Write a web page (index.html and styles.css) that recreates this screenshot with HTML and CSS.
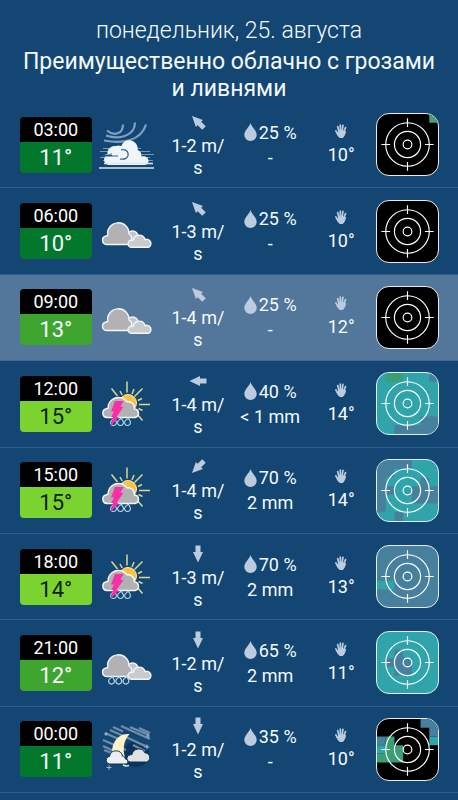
FILE: index.html
```html
<!DOCTYPE html>
<html lang="ru">
<head>
  <meta charset="UTF-8">
  <meta name="viewport" content="width=device-width, initial-scale=1">
  <title>Прогноз погоды</title>
  <link rel="stylesheet" href="styles.css">
</head>
<body>
  <!-- Shared icons -->
  <svg class="sprite" aria-hidden="true">
    <symbol id="arrow" viewBox="0 0 18 18"><path fill="#bccbdd" d="M6.5.5h5v6.500h2.500L9 17.500 4 7h2.500z"/></symbol>
    <symbol id="drop" viewBox="0 0 13 18"><path fill="#bccbdd" d="M6.500 0C7.500 4 12.700 7.500 12.700 12a6.200 6 0 0 1-12.400 0C.3 7.500 5.500 4 6.500 0z"/></symbol>
    <symbol id="hand" viewBox="0 0 12 14">
      <g fill="none" stroke="#bccbdd" stroke-width="1.700" stroke-linecap="round">
        <path d="M4 8 2.700 2.500M5.500 8 5.300 1.200M7 8 7.900 1.300M8.300 9l2.200-5.400M3.500 11 .9 7"/>
      </g>
      <path fill="#bccbdd" d="M3 6.500h6.800l1.200.8c-.2 2.700-1.200 4.700-3.200 6.700H4.800C3.200 12.600 2 11 1.200 9L3 9z"/>
    </symbol>
    <symbol id="scope" viewBox="0 0 63 63">
      <g fill="none" stroke="#fff" stroke-width="1.200">
        <circle cx="31.500" cy="31.500" r="4.500"/>
        <circle cx="31.500" cy="31.500" r="13.500"/>
        <circle cx="31.500" cy="31.500" r="22.500"/>
        <path d="M31.500 4.500v9M31.500 49.500v9M4.500 31.500h9M49.500 31.500h9"/>
      </g>
    </symbol>
    <symbol id="clouds" viewBox="0 0 60 56">
      <g stroke="#f1f6fa" stroke-width="1.400" stroke-linejoin="round">
        <circle cx="35.500" cy="33.500" r="5.500" fill="#c4c4c6"/>
        <path fill="#b2b2b4" d="M9.500 41.500a4.300 4.300 0 0 1-.5-8.500l1.800-.5A10.700 10.700 0 1 1 32 31l2.500 2v8.500z"/>
        <path fill="#cbcbcd" d="M34.500 44.300a3.500 3.500 0 0 1 0-7l1.800-.3a6 6 0 0 1 11.700-.300a3.900 3.900 0 0 1 3.500 7.600z"/>
      </g>
    </symbol>
    <symbol id="rain" viewBox="0 0 60 56">
      <use href="#clouds"/>
      <g fill="#134672" stroke="#b5d9ee" stroke-width="1.200">
        <path id="rain-drop" d="M15.500 41.500c0 1.500 1.900 2.300 1.900 4.300a2.900 2.900 0 1 1-5.700-.3c.2-1.800 2.400-2.500 3.800-4z"/>
        <use href="#rain-drop" x="7.200"/>
        <use href="#rain-drop" x="14.400"/>
      </g>
    </symbol>
    <symbol id="thunder" viewBox="0 0 60 56">
      <g stroke="#d9d795" stroke-width="1.500">
        <path d="M30 5.500v11M14.500 12.500l6 7.500M23 15l2.200 4M37 13l-2 5M45.500 12.500l-8 8M45 22.500l-4 2M53 28.500H42M45.500 34.500l-4-2M45.500 44.500 40 38"/>
      </g>
      <circle cx="31" cy="27" r="8.500" fill="#fcc23f" stroke="#fbe9ae"/>
      <path fill="#b1b0b3" stroke="#f7f7fa" stroke-width="1.500" stroke-linejoin="round" d="M10 41.500a4.400 4.400 0 0 1-.6-8.700l1.700-.6a10.400 10.400 0 0 1 18.800-6.400a6.500 6.500 0 0 1 7.600 7.200a4.300 4.300 0 0 1 .5 8.500z"/>
      <g fill="#134672" stroke="#b5d9ee" stroke-width="1.100">
        <use href="#rain-drop" x="2" y=".5"/>
        <use href="#rain-drop" x="9" y=".5"/>
        <use href="#rain-drop" x="16" y=".5"/>
      </g>
      <path fill="#fa2fa5" d="M18 25h8.500l-3 5.800h3L19.500 41h2.300L13.500 50.500l2.700-9.500h-2l2.800-5.500h-3z"/>
    </symbol>
    <symbol id="wind-fog" viewBox="0 0 60 56">
      <g fill="none" stroke="#7fa0c2" stroke-width="2.200">
        <path d="M10 13.500C17 19.500 26 17 26 7.500M9 18.500C22 23 38 19 38 5.500M7 23.500C26 27 44 24 49 7.500"/>
      </g>
      <g stroke="#7898b8" stroke-width="1">
        <path d="M6 31.500h38M3 34.500h50M8 37.500h49M3 40.500h50M6 43.500h50"/>
      </g>
      <path fill="#f2f5f8" d="M11 48a5.500 5.500 0 0 1-2.500-9h6.800a7.200 7.200 0 0 1 8.900-9.900a8.500 8.500 0 0 1 16.500 3.800a6.500 6.500 0 0 1 3.800 6.600c3.500-1 7 1 7 4.500S49 48 47 48z"/>
      <path fill="#f2f5f8" d="M10.500 37.500a7.300 7.300 0 0 1 8.800-8.300a7 7 0 0 1 5 4.500z"/>
      <path fill="none" stroke="#34628d" stroke-width="1.200" d="M5 39h16M24 33c4-1.500 8 1.500 7 5.500-1 3.500-5 4-8 3.500"/>
      <path stroke="#dce6ef" stroke-width="1.700" d="M2 51h55M7 46.500h49"/>
    </symbol>
    <symbol id="night-fog" viewBox="0 0 60 56">
      <circle cx="39.500" cy="33" r="13" fill="#0c3359"/>
      <g stroke="#6f8cab" stroke-width="2.200">
        <path d="m16 6 10 4.500M24 5l29 13M33 6l19 8M42 7l11 5M13 9l38 17M8 12l18 8M6 19l23 10M31 17l19 9M6 25l15 7M7 29l10 4M36 24l12 6"/>
      </g>
      <path fill="#fff2c7" d="M32.500 13C21.500 12.500 15 20 15 32l13 4c-2.500-8-1.500-16 4.500-23z"/>
      <g stroke="#0c3359" stroke-width="1">
        <path fill="#eeeef0" d="M12.500 43a3.800 3.800 0 0 1-1-7.300l1-.2a6.600 6.600 0 0 1 13-.4c2 0 2.700 1.500 2.900 3 3.200.5 3.500 4.900-.2 4.900z"/>
        <path fill="#e1e1e4" d="M33.500 41a3.600 3.600 0 0 1 0-7.200l1.500-.3a6.900 6.900 0 0 1 13-1.600c5.500 0 6.500 7.500 1.500 9.100z"/>
      </g>
      <path fill="none" stroke="#dbe5ee" stroke-width="1.500" d="M26 44q3 1.500 6 .5"/>
      <path fill="none" stroke="#8fb4d4" d="M50 23.500v5M47.500 26h5M12 44v5M9.500 46.500h5M9 11v4M7 13h4M51 13v4M49 15h4"/>
    </symbol>
  </svg>

  <main class="forecast">
    <header class="forecast-header">
      <p class="date">понедельник, 25. августа</p>
      <h1>Преимущественно облачно с грозами и ливнями</h1>
    </header>

    <table class="hours">
      <tbody>
        <tr>
          <th scope="row" class="col-time"><div class="tile"><time>03:00</time><span class="temp temp-low">11°</span></div></th>
          <td class="col-icon"><svg class="weather"><use href="#wind-fog"/></svg></td>
          <td class="col-wind"><svg class="arrow"><use href="#arrow" transform="rotate(135 9 9)"/></svg>1-2 m/<wbr>s</td>
          <td class="col-rain"><div class="chance"><svg class="drop"><use href="#drop"/></svg>25 %</div>-</td>
          <td class="col-feels"><svg class="hand"><use href="#hand"/></svg>10°</td>
          <td class="col-radar">
            <svg class="radar" viewBox="0 0 63 63">
              <path fill="#4b9d82" d="M54 0h9v9h-9z"/>
              <use href="#scope"/>
            </svg>
          </td>
        </tr>
        <tr>
          <th scope="row" class="col-time"><div class="tile"><time>06:00</time><span class="temp temp-low">10°</span></div></th>
          <td class="col-icon"><svg class="weather"><use href="#clouds"/></svg></td>
          <td class="col-wind"><svg class="arrow"><use href="#arrow" transform="rotate(135 9 9)"/></svg>1-3 m/<wbr>s</td>
          <td class="col-rain"><div class="chance"><svg class="drop"><use href="#drop"/></svg>25 %</div>-</td>
          <td class="col-feels"><svg class="hand"><use href="#hand"/></svg>10°</td>
          <td class="col-radar"><svg class="radar" viewBox="0 0 63 63"><use href="#scope"/></svg></td>
        </tr>
        <tr class="current">
          <th scope="row" class="col-time"><div class="tile"><time>09:00</time><span class="temp temp-mid">13°</span></div></th>
          <td class="col-icon"><svg class="weather"><use href="#clouds"/></svg></td>
          <td class="col-wind"><svg class="arrow"><use href="#arrow" transform="rotate(135 9 9)"/></svg>1-4 m/<wbr>s</td>
          <td class="col-rain"><div class="chance"><svg class="drop"><use href="#drop"/></svg>25 %</div>-</td>
          <td class="col-feels"><svg class="hand"><use href="#hand"/></svg>12°</td>
          <td class="col-radar"><svg class="radar" viewBox="0 0 63 63"><use href="#scope"/></svg></td>
        </tr>
        <tr>
          <th scope="row" class="col-time"><div class="tile"><time>12:00</time><span class="temp temp-high">15°</span></div></th>
          <td class="col-icon"><svg class="weather"><use href="#thunder"/></svg></td>
          <td class="col-wind"><svg class="arrow"><use href="#arrow" transform="rotate(90 9 9)"/></svg>1-4 m/<wbr>s</td>
          <td class="col-rain"><div class="chance"><svg class="drop"><use href="#drop"/></svg>40 %</div>&lt; 1 mm</td>
          <td class="col-feels"><svg class="hand"><use href="#hand"/></svg>14°</td>
          <td class="col-radar">
            <svg class="radar radar-teal" viewBox="0 0 63 63">
              <path fill="#3b9f76" d="M9 0h18v9H9z"/>
              <path fill="#46809c" d="M54 0h9v9h-9zM45 45h18v18H18v-9h27z"/>
              <use href="#scope"/>
            </svg>
          </td>
        </tr>
        <tr>
          <th scope="row" class="col-time"><div class="tile"><time>15:00</time><span class="temp temp-high">15°</span></div></th>
          <td class="col-icon"><svg class="weather"><use href="#thunder"/></svg></td>
          <td class="col-wind"><svg class="arrow"><use href="#arrow" transform="rotate(45 9 9)"/></svg>1-4 m/<wbr>s</td>
          <td class="col-rain"><div class="chance"><svg class="drop"><use href="#drop"/></svg>70 %</div>2 mm</td>
          <td class="col-feels"><svg class="hand"><use href="#hand"/></svg>14°</td>
          <td class="col-radar">
            <svg class="radar radar-teal" viewBox="0 0 63 63">
              <path fill="#46809c" d="M0 0h36v9H18v9H9v9h9v9H9v18H0zM45 18h9v9h9v18H36V27h9zM18 54h9v9h-9z"/>
              <use href="#scope"/>
            </svg>
          </td>
        </tr>
        <tr>
          <th scope="row" class="col-time"><div class="tile"><time>18:00</time><span class="temp temp-high">14°</span></div></th>
          <td class="col-icon"><svg class="weather"><use href="#thunder"/></svg></td>
          <td class="col-wind"><svg class="arrow"><use href="#arrow"/></svg>1-3 m/<wbr>s</td>
          <td class="col-rain"><div class="chance"><svg class="drop"><use href="#drop"/></svg>70 %</div>2 mm</td>
          <td class="col-feels"><svg class="hand"><use href="#hand"/></svg>13°</td>
          <td class="col-radar">
            <svg class="radar radar-slate" viewBox="0 0 63 63">
              <path fill="#2fa5ab" d="M0 36h18v9H0z"/>
              <use href="#scope"/>
            </svg>
          </td>
        </tr>
        <tr>
          <th scope="row" class="col-time"><div class="tile"><time>21:00</time><span class="temp temp-mid">12°</span></div></th>
          <td class="col-icon"><svg class="weather"><use href="#rain"/></svg></td>
          <td class="col-wind"><svg class="arrow"><use href="#arrow"/></svg>1-2 m/<wbr>s</td>
          <td class="col-rain"><div class="chance"><svg class="drop"><use href="#drop"/></svg>65 %</div>2 mm</td>
          <td class="col-feels"><svg class="hand"><use href="#hand"/></svg>11°</td>
          <td class="col-radar">
            <svg class="radar radar-teal" viewBox="0 0 63 63">
              <path fill="#46809c" d="M18 18h9v9h9v18H18v-9H9v-9h9z"/>
              <use href="#scope"/>
            </svg>
          </td>
        </tr>
        <tr>
          <th scope="row" class="col-time"><div class="tile"><time>00:00</time><span class="temp temp-low">11°</span></div></th>
          <td class="col-icon"><svg class="weather"><use href="#night-fog"/></svg></td>
          <td class="col-wind"><svg class="arrow"><use href="#arrow"/></svg>1-2 m/<wbr>s</td>
          <td class="col-rain"><div class="chance"><svg class="drop"><use href="#drop"/></svg>35 %</div>-</td>
          <td class="col-feels"><svg class="hand"><use href="#hand"/></svg>10°</td>
          <td class="col-radar">
            <svg class="radar" viewBox="0 0 63 63">
              <path fill="#46809c" d="M45 0h18v18h-9V9h-9zM0 18h9v9H0z"/>
              <path fill="#2fa5ab" d="M54 18h9v9h-9zM0 27h9v9H0z"/>
              <path fill="#3b9f76" d="M9 18h9v9h9v18H0v-9h9z"/>
              <use href="#scope"/>
            </svg>
          </td>
        </tr>
      </tbody>
    </table>
  </main>
</body>
</html>
```

FILE: styles.css
```css
* { box-sizing: border-box; }
body {
  margin: 0;
  font-family: Roboto, "Liberation Sans", sans-serif;
  background: #134672;
  color: #f4fafd;
}
.sprite {
  position: absolute;
  width: 0;
  height: 0;
}
.forecast {
  display: flex;
  flex-direction: column;
  min-height: 100vh;
  padding-bottom: 7px;
}
.forecast-header {
  padding: 16px 20px 0;
  text-align: center;
}
.date {
  margin: 0;
  font-size: 23px;
  font-weight: 300;
  line-height: 30px;
}
h1 {
  margin: 2px 0 0;
  font-size: 23px;
  font-weight: 400;
  line-height: 27px;
}

/* Hourly rows */
.hours {
  flex: 1;
  width: 100%;
  table-layout: fixed;
  border-spacing: 0;
  font-size: 18px;
  line-height: 22px;
}
th, td {
  padding: 0;
  border-bottom: 1px solid #2d5d8b;
  font-weight: 400;
  text-align: center;
  vertical-align: middle;
}
.current th, .current td {
  background: #52779a;
  border-bottom-color: #42698e;
}
.hours svg {
  display: block;
  margin: 0 auto;
}
.col-time { width: 20%; padding-left: 20px; }
.col-icon { width: 15%; padding-left: 2px; }
.col-wind { width: 16%; padding: 2px 6px 0 8px; }
.col-rain { width: 16%; }
.col-feels { width: 15%; }
.col-radar { width: 18%; padding-right: 20px; }

.tile {
  overflow: hidden;
  border-radius: 4px;
}
.tile time {
  display: block;
  background: #000;
  color: #fff;
  line-height: 25px;
}
.temp {
  display: block;
  font-size: 22px;
  line-height: 31px;
}
.temp-low { background: #03782c; }
.temp-mid { background: #3ea52f; }
.temp-high { background: #7bd330; color: #101c10; }

.weather {
  width: 60px;
  height: 56px;
}
.hours .arrow {
  width: 18px;
  height: 18px;
  margin-bottom: 4px;
}
.col-rain { line-height: 25px; }
.chance {
  display: flex;
  justify-content: center;
  align-items: center;
  gap: 2px;
}
.chance .drop {
  width: 13px;
  height: 18px;
  margin: 0;
}
.hours .hand {
  width: 12px;
  height: 14px;
  margin-bottom: 6px;
}
.radar {
  width: 63px;
  height: 63px;
  border: 1px solid #e6edf0;
  border-radius: 13px;
  background: #000;
}
.radar-teal { background: #2fa5ab; }
.radar-slate { background: #46809c; }
```
